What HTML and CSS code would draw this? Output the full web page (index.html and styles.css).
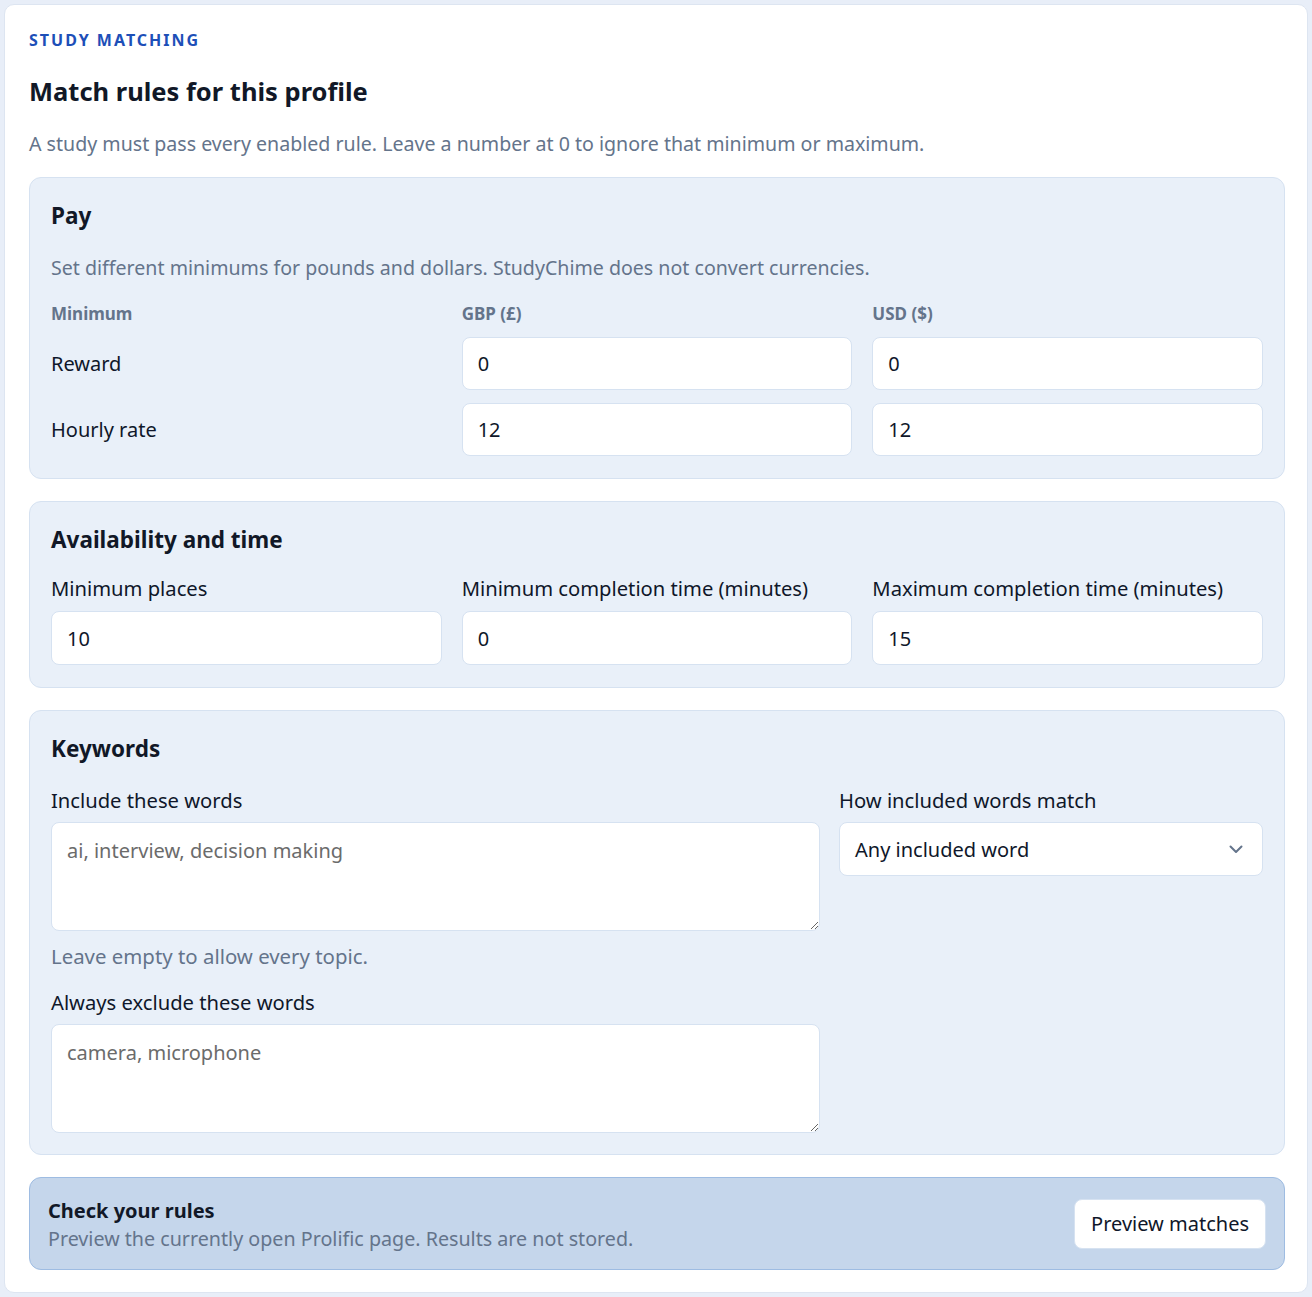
FILE: index.html
```html
<!DOCTYPE html>
<html lang="en">
<head>
<meta charset="utf-8">
<title>Study matching</title>
<link rel="stylesheet" href="styles.css">
</head>
<body>
<main class="card">
  <div class="eyebrow">Study matching</div>
  <h1 class="title">Match rules for this profile</h1>
  <p class="lead">A study must pass every enabled rule. Leave a number at 0 to ignore that minimum or maximum.</p>

  <section class="panel">
    <h2 class="panel-title">Pay</h2>
    <p class="panel-desc">Set different minimums for pounds and dollars. StudyChime does not convert currencies.</p>
    <div class="pay-grid">
      <div class="col-head">Minimum</div>
      <div class="col-head">GBP (£)</div>
      <div class="col-head">USD ($)</div>
      <div class="row-label">Reward</div>
      <input class="field" type="text" value="0">
      <input class="field" type="text" value="0">
      <div class="row-label">Hourly rate</div>
      <input class="field" type="text" value="12">
      <input class="field" type="text" value="12">
    </div>
  </section>

  <section class="panel panel-avail">
    <h2 class="panel-title">Availability and time</h2>
    <div class="three-grid">
      <label class="group">
        <span class="label">Minimum places</span>
        <input class="field" type="text" value="10">
      </label>
      <label class="group">
        <span class="label">Minimum completion time (minutes)</span>
        <input class="field" type="text" value="0">
      </label>
      <label class="group">
        <span class="label">Maximum completion time (minutes)</span>
        <input class="field" type="text" value="15">
      </label>
    </div>
  </section>

  <section class="panel">
    <h2 class="panel-title">Keywords</h2>
    <div class="kw-grid">
      <div class="kw-main">
        <label class="group">
          <span class="label">Include these words</span>
          <textarea class="area" placeholder="ai, interview, decision making"></textarea>
        </label>
        <p class="hint">Leave empty to allow every topic.</p>
        <label class="group">
          <span class="label">Always exclude these words</span>
          <textarea class="area" placeholder="camera, microphone"></textarea>
        </label>
      </div>
      <label class="group kw-side">
        <span class="label">How included words match</span>
        <div class="select">
          <span>Any included word</span>
          <svg class="chev" width="16" height="16" viewBox="0 0 16 16" aria-hidden="true"><path d="M2.5 5.5 8 11l5.5-5.5" fill="none" stroke="#64748b" stroke-width="2" stroke-linecap="round" stroke-linejoin="round"/></svg>
        </div>
      </label>
    </div>
  </section>

  <section class="check">
    <div class="check-text">
      <div class="check-title">Check your rules</div>
      <div class="check-desc">Preview the currently open Prolific page. Results are not stored.</div>
    </div>
    <button class="btn" type="button">Preview matches</button>
  </section>
</main>
</body>
</html>
```

FILE: styles.css
```css
* { box-sizing: border-box; }
html, body { margin: 0; }
body {
  background: #e8eef8;
  padding: 4px;
  font-family: "Noto Sans", "Open Sans", sans-serif;
  color: #0f172a;
}
.card {
  background: #ffffff;
  border: 1px solid #dde5f1;
  border-radius: 10px;
  padding: 24px 22px 22px 24px;
  min-height: 1289px;
}
.eyebrow {
  color: #1d4fb8;
  font-weight: 700;
  font-size: 16px;
  letter-spacing: 0.125em;
  text-transform: uppercase;
  line-height: 22px;
}
.title {
  margin: 22px 0 0;
  font-size: 25.5px;
  line-height: 36px;
  font-weight: 700;
  color: #111827;
}
.lead {
  margin: 21px 0 19px;
  font-size: 19.6px;
  line-height: 28px;
  color: #64748b;
}
.panel {
  background: #e9f0f9;
  border: 1px solid #d6e2f1;
  border-radius: 12px;
  padding: 21px 21px 21px 21px;
  margin-bottom: 22px;
}
.panel-avail { padding-bottom: 22px; }
.panel-title {
  margin: 0;
  font-size: 22.5px;
  line-height: 34px;
  font-weight: 700;
  color: #111827;
}
.panel-desc {
  margin: 21px 0 0;
  font-size: 19.6px;
  line-height: 28px;
  color: #64748b;
}
.pay-grid {
  display: grid;
  grid-template-columns: repeat(3, minmax(0, 1fr));
  column-gap: 20px;
  row-gap: 13px;
  align-items: center;
  margin-top: 20px;
}
.col-head {
  font-size: 17px;
  font-weight: 700;
  color: #64748b;
  line-height: 24px;
  margin-bottom: -2px;
}
.row-label {
  font-size: 20px;
  line-height: 28px;
}
.field {
  display: block;
  width: 100%;
  height: 53px;
  border: 1px solid #d6e2f1;
  border-radius: 8px;
  background: #ffffff;
  padding: 0 15px;
  font: inherit;
  font-size: 20px;
  color: #0f172a;
}
.pay-grid .field:nth-of-type(n+3) { margin-bottom: 1px; }
.three-grid {
  display: grid;
  grid-template-columns: repeat(3, minmax(0, 1fr));
  column-gap: 20px;
  margin-top: 17px;
}
.three-grid .group { gap: 9px; }
.three-grid .field { height: 54px; }
.group {
  display: flex;
  flex-direction: column;
  gap: 8px;
}
.label {
  font-size: 20.2px;
  line-height: 28px;
  color: #0f172a;
}
.kw-grid {
  display: grid;
  grid-template-columns: minmax(0, 1fr) 424px;
  column-gap: 19px;
  margin-top: 20px;
  align-items: start;
}
.kw-main {
  display: flex;
  flex-direction: column;
}
.area {
  display: block;
  width: 100%;
  height: 109px;
  border: 1px solid #d6e2f1;
  border-radius: 8px;
  background: #ffffff;
  padding: 14px 15px;
  font: inherit;
  font-size: 20px;
  line-height: 28px;
  color: #0f172a;
  resize: vertical;
}
.area::placeholder { color: #6b6b6b; }
.hint {
  margin: 11px 0 18px;
  font-size: 20.4px;
  line-height: 28px;
  color: #64748b;
}
.select {
  display: flex;
  align-items: center;
  justify-content: space-between;
  height: 54px;
  border: 1px solid #d6e2f1;
  border-radius: 8px;
  background: #ffffff;
  padding: 0 18px 0 15px;
  font-size: 20px;
  color: #0f172a;
}
.chev { display: block; }
.check {
  display: flex;
  align-items: center;
  justify-content: space-between;
  background: #c5d6eb;
  border: 1px solid #9ebce2;
  border-radius: 12px;
  padding: 19px 18px 16px 18px;
}
.check-title {
  font-size: 20px;
  font-weight: 700;
  line-height: 28px;
  color: #111827;
}
.check-desc {
  font-size: 19.7px;
  line-height: 28px;
  color: #64748b;
}
.btn {
  background: #ffffff;
  border: 1px solid #d6e2f1;
  border-radius: 8px;
  height: 50px;
  padding: 0 16px;
  margin-bottom: 3px;
  font: inherit;
  font-size: 20px;
  color: #0f172a;
  cursor: pointer;
}
```
